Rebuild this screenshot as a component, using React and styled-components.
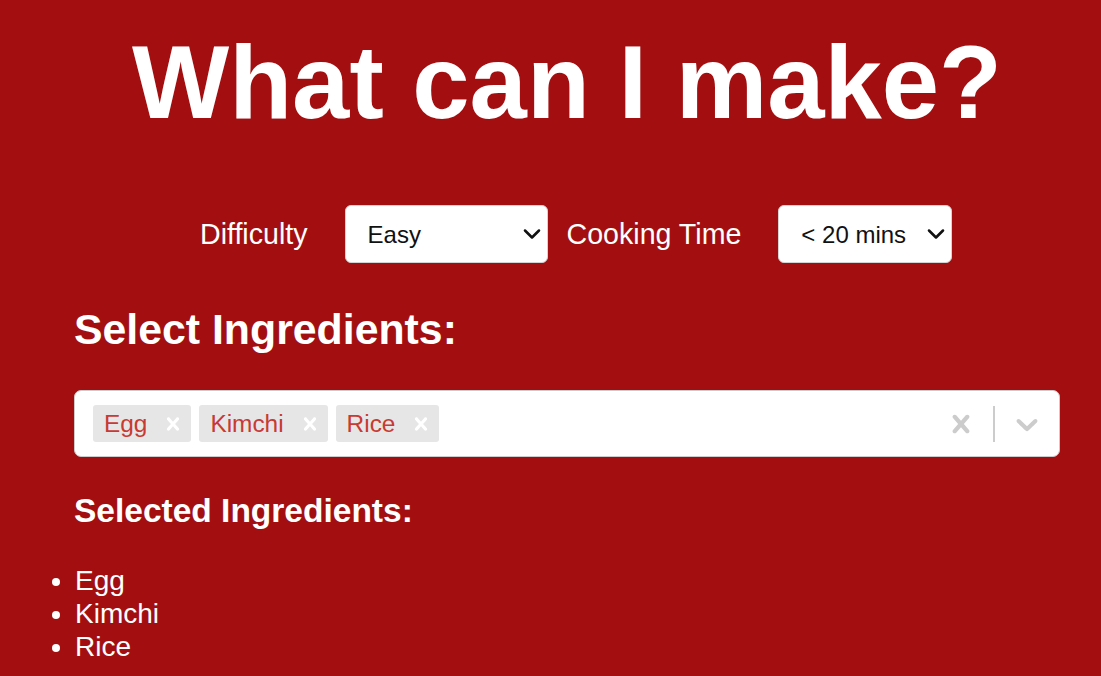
import React, { useState } from 'react';
import styled, { createGlobalStyle } from 'styled-components';
import { ChevronDown } from 'lucide-react';

const GlobalStyle = createGlobalStyle`
  html, body {
    margin: 0;
    padding: 0;
    background-color: #a30f10;
    font-family: "Liberation Sans", Arial, sans-serif;
  }
`;

const crossPath =
  'M14.348 14.849c-0.469 0.469-1.229 0.469-1.697 0l-2.651-3.030-2.651 3.029c-0.469 0.469-1.229 0.469-1.697 0-0.469-0.469-0.469-1.229 0-1.697l2.758-3.15-2.759-3.152c-0.469-0.469-0.469-1.228 0-1.697s1.228-0.469 1.697 0l2.652 3.031 2.651-3.031c0.469-0.469 1.228-0.469 1.697 0s0.469 1.229 0 1.697l-2.758 3.152 2.758 3.15c0.469 0.469 0.469 1.229 0 1.698z';
const chevronPath =
  'M4.516 7.548c0.436-0.446 1.043-0.481 1.576 0l3.908 3.747 3.908-3.747c0.533-0.481 1.141-0.446 1.574 0 0.436 0.445 0.408 1.197 0 1.615-0.406 0.418-4.695 4.502-4.695 4.502-0.217 0.223-0.502 0.335-0.787 0.335s-0.57-0.112-0.789-0.335c0 0-4.287-4.084-4.695-4.502s-0.436-1.17 0-1.615z';

const Icon = ({ d, size }) => (
  <svg width={size} height={size} viewBox="0 0 20 20" fill="currentColor" aria-hidden="true">
    <path d={d} />
  </svg>
);

const App = () => {
  const [difficulty, setDifficulty] = useState('easy');
  const [time, setTime] = useState('20');
  const [selected, setSelected] = useState(['Egg', 'Kimchi', 'Rice']);

  const removeItem = (name) => setSelected(selected.filter((s) => s !== name));

  return (
    <>
      <GlobalStyle />
      <Container>
        <Title>What can I make?</Title>

        <FilterRow>
          <Label>Difficulty</Label>
          <SelectWrap $width={203} $gap={19}>
            <Select value={difficulty} onChange={(e) => setDifficulty(e.target.value)}>
              <option value="easy">Easy</option>
              <option value="medium">Medium</option>
              <option value="hard">Hard</option>
            </Select>
            <Chevron>
              <ChevronDown size={28} strokeWidth={2.2} />
            </Chevron>
          </SelectWrap>
          <Label>Cooking Time</Label>
          <SelectWrap $width={174} $gap={0}>
            <Select value={time} onChange={(e) => setTime(e.target.value)}>
              <option value="20">&lt; 20 mins</option>
              <option value="40">&lt; 40 mins</option>
              <option value="60">&lt; 60 mins</option>
            </Select>
            <Chevron>
              <ChevronDown size={28} strokeWidth={2.2} />
            </Chevron>
          </SelectWrap>
        </FilterRow>

        <SectionTitle>Select Ingredients:</SectionTitle>

        <Control>
          <ValueContainer>
            {selected.map((name) => (
              <Chip key={name}>
                <ChipLabel>{name}</ChipLabel>
                <ChipRemove onClick={() => removeItem(name)}>
                  <Icon d={crossPath} size={26} />
                </ChipRemove>
              </Chip>
            ))}
          </ValueContainer>
          <Indicators>
            <Indicator onClick={() => setSelected([])}>
              <Icon d={crossPath} size={36} />
            </Indicator>
            <Separator />
            <Indicator>
              <Icon d={chevronPath} size={36} />
            </Indicator>
          </Indicators>
        </Control>

        <SubTitle>Selected Ingredients:</SubTitle>
        <List>
          {selected.map((name) => (
            <Item key={name}>{name}</Item>
          ))}
        </List>
      </Container>
    </>
  );
};

export default App;

// Styled Components
const Container = styled.div`
  padding: 24px 41px 0 74px;
  color: #fff;
`;

const Title = styled.h1`
  margin: 0;
  font-size: 103px;
  line-height: 118px;
  font-weight: bold;
  text-align: center;
`;

const FilterRow = styled.div`
  display: flex;
  align-items: center;
  margin-top: 63px;
  padding-left: 126px;
  height: 58px;
`;

const Label = styled.span`
  font-size: 28.6px;
  line-height: 32px;
  margin-right: 37px;
`;

const SelectWrap = styled.div`
  position: relative;
  width: ${(p) => p.$width}px;
  height: 58px;
  margin-right: ${(p) => p.$gap}px;
`;

const Select = styled.select`
  appearance: none;
  width: 100%;
  height: 100%;
  box-sizing: border-box;
  padding: 0 40px 0 22px;
  border: 1px solid #d4d4d4;
  border-radius: 6px;
  background: #fff;
  color: #111;
  font-family: "Liberation Sans", Arial, sans-serif;
  font-size: 24px;
  outline: none;
`;

const Chevron = styled.span`
  position: absolute;
  right: 2px;
  top: 15px;
  display: flex;
  color: #111;
  pointer-events: none;
`;

const SectionTitle = styled.h2`
  margin: 42px 0 0;
  font-size: 42.8px;
  line-height: 48px;
  font-weight: bold;
`;

const Control = styled.div`
  margin-top: 37px;
  height: 67px;
  box-sizing: border-box;
  display: flex;
  align-items: center;
  background: #fff;
  border: 1px solid #ccc;
  border-radius: 7px;
`;

const ValueContainer = styled.div`
  flex: 1;
  display: flex;
  align-items: center;
  gap: 8px;
  padding-left: 18px;
`;

const Chip = styled.div`
  display: flex;
  align-items: center;
  height: 37px;
  background: #e6e6e6;
  border-radius: 3px;
`;

const ChipLabel = styled.span`
  padding: 0 8px 0 11px;
  font-size: 24.4px;
  line-height: 27px;
  color: #c83a33;
`;

const ChipRemove = styled.span`
  display: flex;
  align-items: center;
  padding: 0 5px;
  color: #fff;
  cursor: pointer;
`;

const Indicators = styled.div`
  display: flex;
  align-items: center;
  align-self: stretch;
`;

const Indicator = styled.div`
  display: flex;
  align-items: center;
  padding: 0 14px;
  color: #cccccc;
  cursor: pointer;
`;

const Separator = styled.span`
  width: 2px;
  height: 36px;
  background: #cccccc;
`;

const SubTitle = styled.h3`
  margin: 35px 0 0;
  font-size: 33.5px;
  line-height: 38px;
  font-weight: bold;
`;

const List = styled.ul`
  margin: 34px 0 0;
  padding: 0 0 0 1px;
`;

const Item = styled.li`
  font-size: 28px;
  line-height: 33px;
`;
